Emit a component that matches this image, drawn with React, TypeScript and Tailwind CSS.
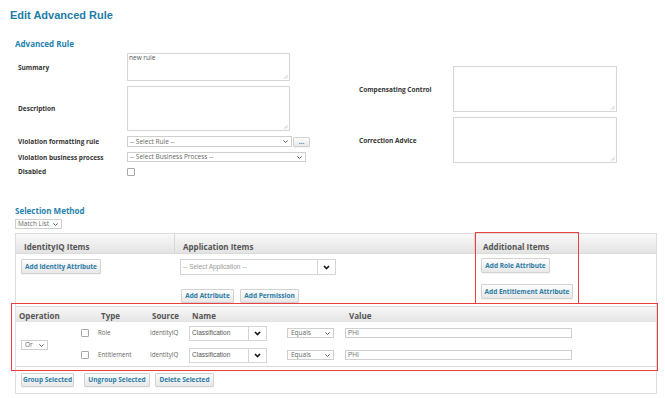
import type { ReactNode } from 'react';

// small thin caret used by native-looking selects
function Caret() {
  return (
    <svg width="5" height="3" viewBox="0 0 5 3" className="shrink-0">
      <path d="M0.4 0.4 L2.5 2.5 L4.6 0.4" stroke="#444" strokeWidth="0.9" fill="none" />
    </svg>
  );
}

// heavy chevron used by the combo boxes
function BoldChevron() {
  return (
    <svg width="7" height="5" viewBox="0 0 7 5">
      <path d="M1 1 L3.5 3.6 L6 1" stroke="#1a1a1a" strokeWidth="1.7" fill="none" />
    </svg>
  );
}

function Grip() {
  return (
    <svg className="absolute right-[1px] bottom-[1px]" width="5" height="5" viewBox="0 0 5 5">
      <path d="M4.6 1 L1 4.6 M4.6 3 L3 4.6" stroke="#b5b5b5" strokeWidth="0.7" />
    </svg>
  );
}

function Area({ className = '', children }: { className?: string; children?: ReactNode }) {
  return (
    <div className={`relative border border-[#d6d6d6] bg-white shadow-[inset_0_0_1px_rgba(0,0,0,0.08)] ${className}`}>
      {children}
      <Grip />
    </div>
  );
}

function Select({ className = '', text }: { className?: string; text: string }) {
  return (
    <div className={`flex items-center justify-between border border-[#cfcfcf] bg-white pl-[2px] pr-[3px] text-[6.5px] text-[#666] ${className}`}>
      <span className="whitespace-nowrap leading-[8px]">{text}</span>
      <Caret />
    </div>
  );
}

function Combo({ className = '', text, tone = 'text-[#777]' }: { className?: string; text: string; tone?: string }) {
  return (
    <div className={`flex border border-[#d4d4d4] bg-white ${className}`}>
      <div className={`flex flex-1 items-center whitespace-nowrap pl-[2px] font-['Liberation_Sans',Arial,sans-serif] text-[6.5px] leading-[8px] ${tone}`}>
        {text}
      </div>
      <div className="flex w-[18px] items-center justify-center border-l border-[#d4d4d4]">
        <BoldChevron />
      </div>
    </div>
  );
}

function Btn({ className = '', children }: { className?: string; children: ReactNode }) {
  return (
    <div className={`flex items-center justify-center whitespace-nowrap rounded-[1px] border border-[#d2d2d2] bg-linear-to-b from-[#fdfdfd] to-[#e8e8e8] text-[6.5px] font-bold leading-[8px] text-[#2b7ba5] shadow-[0_1px_0_rgba(0,0,0,0.04)] ${className}`}>
      {children}
    </div>
  );
}

function Check() {
  return <div className="h-[8px] w-[8px] rounded-[1px] border border-[#a8a8a8] bg-white" />;
}

function Row({ label, w, children }: { label: string; w: string; children: ReactNode }) {
  return (
    <div className="flex items-center">
      <div className={`${w} shrink-0 text-[6.5px] font-bold leading-[9px] text-[#333]`}>{label}</div>
      {children}
    </div>
  );
}

export default function App() {
  return (
    <div className="relative h-[398px] w-[665px] overflow-hidden bg-white font-['Open_Sans',sans-serif] text-[#333]">
      <div className="pl-[10px] pt-[8px] font-['Liberation_Sans',Arial,sans-serif] text-[11px] font-bold leading-[14px] text-[#1c7ca7]">
        Edit Advanced Rule
      </div>
      <div className="mt-[16px] pl-[15px] text-[8px] font-bold leading-[11px] text-[#2582ad]">Advanced Rule</div>

      {/* Form */}
      <div className="mt-[4px] flex">
        <div className="flex flex-col gap-[5px] pl-[18px]">
          <Row label="Summary" w="w-[109px]">
            <Area className="h-[28px] w-[163px]">
              <div className="pl-[1px] text-[6.5px] leading-[8px] text-[#555]">new rule</div>
            </Area>
          </Row>
          <Row label="Description" w="w-[109px]">
            <Area className="h-[45px] w-[163px]" />
          </Row>
          <Row label="Violation formatting rule" w="w-[109px]">
            <Select className="h-[11px] w-[165px]" text="-- Select Rule --" />
            <Btn className="ml-[1px] h-[10px] w-[17px] text-[#2b7ba5]">...</Btn>
          </Row>
          <Row label="Violation business process" w="w-[109px]">
            <Select className="h-[10px] w-[179px]" text="-- Select Business Process --" />
          </Row>
          <Row label="Disabled" w="w-[109px]">
            <Check />
          </Row>
        </div>
        <div className="ml-[49px] mt-[13px] flex flex-col gap-[5px]">
          <Row label="Compensating Control" w="w-[94px]">
            <Area className="h-[46px] w-[164px]" />
          </Row>
          <Row label="Correction Advice" w="w-[94px]">
            <Area className="h-[46px] w-[164px]" />
          </Row>
        </div>
      </div>

      {/* Selection method */}
      <div className="mt-[29px] pl-[15px] text-[8px] font-bold leading-[11px] text-[#2582ad]">Selection Method</div>
      <Select className="ml-[15px] mt-[3px] h-[10px] w-[47px]" text="Match List" />

      <div className="ml-[15px] mt-[4px] h-[161px] w-[642px] border border-[#dedede]">
        {/* items header */}
        <div className="flex h-[20px] border-b border-[#dadada] bg-linear-to-b from-[#f9f9f9] to-[#e3e3e3] text-[8px] font-bold leading-[11px] text-[#555]">
          <div className="flex w-[159px] items-end border-r border-[#d6d6d6] pb-[1px] pl-[8px]">IdentityIQ Items</div>
          <div className="flex w-[300px] items-end border-r border-[#d6d6d6] pb-[1px] pl-[8px]">Application Items</div>
          <div className="flex flex-1 items-end pb-[1px] pl-[8px]">Additional Items</div>
        </div>
        {/* items body */}
        <div className="flex h-[52px]">
          <div className="w-[159px] pl-[5px] pt-[5px]">
            <Btn className="h-[15px] w-[80px]">Add Identity Attribute</Btn>
          </div>
          <div className="w-[300px] pl-[5px] pt-[5px]">
            <Combo className="h-[16px] w-[156px]" text="-- Select Application --" tone="text-[#9a9a9a]" />
            <div className="mt-[14px] flex gap-[6px] pl-[1px]">
              <Btn className="h-[14px] w-[53px]">Add Attribute</Btn>
              <Btn className="h-[14px] w-[59px]">Add Permission</Btn>
            </div>
          </div>
          <div className="flex-1 pl-[6px] pt-[4px]">
            <Btn className="h-[15px] w-[69px]">Add Role Attribute</Btn>
            <Btn className="mt-[11px] h-[15px] w-[92px]">Add Entitlement Attribute</Btn>
          </div>
        </div>

        {/* criteria table */}
        <div className="border-y border-[#dadada]">
          <div className="grid h-[15px] grid-cols-[63px_16px_53px_39px_96px_58px_1fr] bg-linear-to-b from-[#f9f9f9] to-[#e3e3e3] pt-[3px] text-[8px] font-bold leading-[11px] text-[#555]">
            <div className="pl-[3px]">Operation</div>
            <div />
            <div className="pl-[6px]">Type</div>
            <div className="pl-[4px]">Source</div>
            <div className="pl-[5px]">Name</div>
            <div />
            <div className="pl-[8px]">Value</div>
          </div>
          <div className="grid grid-cols-[63px_16px_53px_39px_96px_58px_1fr] grid-rows-[22px_22px] text-[6.2px] leading-[8px] text-[#666]">
            <div className="row-span-2 flex items-center pl-[5px] pt-[2px]">
              <Select className="h-[10px] w-[27px] pl-[3px]" text="Or" />
            </div>
            {[
              ['Role', 'IdentityIQ'],
              ['Entitlement', 'IdentityIQ'],
            ].map(([type, source]) => (
              <div key={type} className="contents">
                <div className="flex items-center pl-[2px]">
                  <Check />
                </div>
                <div className="flex items-center pl-[3px]">{type}</div>
                <div className="flex items-center pl-[2px]">{source}</div>
                <div className="flex items-center pl-[2px]">
                  <Combo className="h-[15px] w-[78px]" text="Classification" tone="text-[#555]" />
                </div>
                <div className="flex items-center pl-[4px]">
                  <Select className="h-[10px] w-[47px] pl-[3px]" text="Equals" />
                </div>
                <div className="flex items-center pl-[4px]">
                  <div className="flex h-[10px] w-[227px] items-center border border-[#cfcfcf] bg-white pl-[2px] font-['Liberation_Sans',Arial,sans-serif] text-[6.5px] text-[#777]">
                    PHI
                  </div>
                </div>
              </div>
            ))}
          </div>
        </div>

        {/* group buttons */}
        <div className="flex pl-[5px] pt-[6px]">
          <Btn className="h-[14px] w-[53px]">Group Selected</Btn>
          <Btn className="ml-[10px] h-[14px] w-[66px]">Ungroup Selected</Btn>
          <Btn className="ml-[5px] h-[14px] w-[59px]">Delete Selected</Btn>
        </div>
      </div>

      {/* red annotation boxes */}
      <div className="absolute left-[475px] top-[232px] h-[72px] w-[104px] border border-[#e8403f]" />
      <div className="absolute left-[11px] top-[303px] h-[68px] w-[647px] border border-[#e8403f]" />
    </div>
  );
}
